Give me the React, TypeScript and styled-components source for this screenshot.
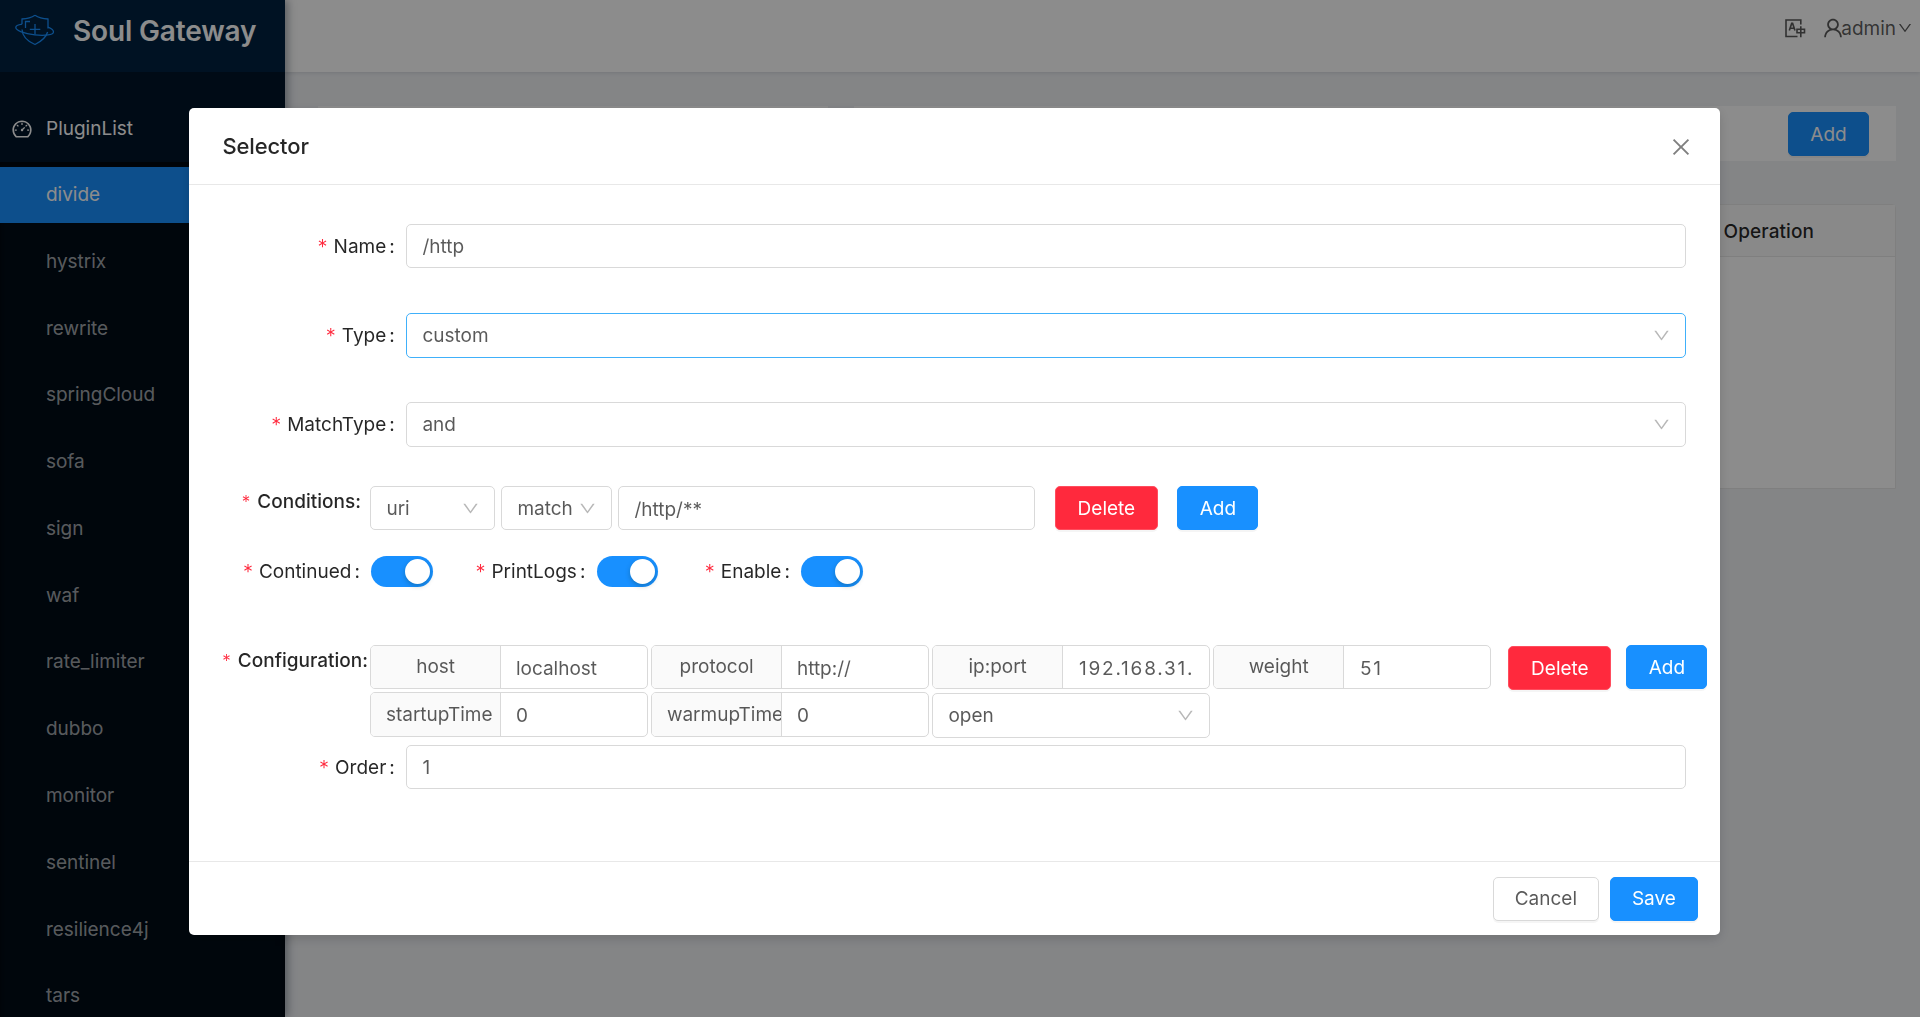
import React from "react";
import styled, { createGlobalStyle } from "styled-components";
import { AiOutlineDashboard, AiOutlineUser, AiOutlineDown, AiOutlineClose } from "react-icons/ai";

const Global = createGlobalStyle`
  *, *::before, *::after { box-sizing: border-box; }
  body { margin: 0; overflow: hidden; font-family: Inter, "Liberation Sans", sans-serif; font-size: 19px; color: rgba(0,0,0,.65); }
`;

const Layout = styled.div`
  display: flex;
  width: 1920px;
  height: 1017px;
  overflow: hidden;
  background: #f0f2f5;
`;

const Sider = styled.aside`
  width: 285.4px;
  flex: none;
  display: flex;
  flex-direction: column;
  background: #001529;
  box-shadow: 3px 0 8px rgba(0, 21, 41, 0.35);
  z-index: 1;
`;

const Brand = styled.div`
  height: 72px;
  flex: none;
  display: flex;
  align-items: flex-start;
  padding: 14px 0 0 15px;
  background: #002140;
`;

const BrandName = styled.h1`
  margin: -2px 0 0 18px;
  font-size: 28px;
  line-height: 38px;
  font-weight: 600;
  letter-spacing: -0.15px;
  color: #fff;
  white-space: nowrap;
`;

const MenuTitle = styled.div`
  height: 90px;
  flex: none;
  display: flex;
  align-items: center;
  gap: 13px;
  padding: 23px 0 0 11px;
  color: #fff;
`;

const SubMenu = styled.ul`
  margin: 0;
  padding: 5px 0 0;
  list-style: none;
  flex: 1;
  background: #000c17;
  box-shadow: inset 0 3px 9px rgba(0, 0, 0, 0.45);
`;

const MenuItem = styled.li<{ $active?: boolean }>`
  height: 55.6px;
  margin-bottom: 11.2px;
  padding-left: 46px;
  line-height: 56.4px;
  letter-spacing: -0.03px;
  color: ${(p) => (p.$active ? "#fff" : "rgba(255,255,255,.65)")};
  background: ${(p) => (p.$active ? "#1890ff" : "transparent")};
`;

const Main = styled.div`
  flex: 1;
  display: flex;
  flex-direction: column;
`;

const TopBar = styled.header`
  height: 72px;
  display: flex;
  justify-content: flex-end;
  padding: 0 7px 16px 0;
  align-items: center;
  background: #fff;
  box-shadow: 0 1px 4px rgba(0, 21, 41, 0.12);
`;

const UserName = styled.span`
  display: flex;
  align-items: center;
  gap: 1px;
  margin-left: 15px;
  svg:first-child { margin-right: -5px; }
`;

const Content = styled.main`
  display: flex;
  flex-direction: column;
  padding: 34px 24px 0 33px;
`;

const Toolbars = styled.div`
  display: grid;
  grid-template-columns: 510px 1fr;
  gap: 26px;
`;

const Toolbar = styled.div`
  height: 55px;
  display: flex;
  justify-content: flex-end;
  align-items: center;
  padding: 1px 27px 0 0;
  background: #fff;
`;

const Table = styled.div`
  height: 285px;
  margin-top: 43px;
  border: 1px solid #e8e8e8;
  border-radius: 4px 4px 0 0;
  background: #fff;
`;

const TableHead = styled.div`
  height: 52px;
  display: flex;
  justify-content: flex-end;
  align-items: center;
  padding: 2px 81px 0 0;
  border-bottom: 1px solid #e8e8e8;
  background: #fafafa;
  color: rgba(0, 0, 0, 0.85);
  font-weight: 500;
  letter-spacing: 0.08px;
`;

const Mask = styled.div`
  position: fixed;
  inset: 0;
  z-index: 10;
  padding: 108.4px 0 0 189.4px;
  background: rgba(0, 0, 0, 0.45);
`;

const Modal = styled.section`
  width: 1530.5px;
  height: 827px;
  display: flex;
  flex-direction: column;
  border-radius: 5px;
  background: #fff;
  box-shadow: 0 4px 12px rgba(0, 0, 0, 0.15);
`;

const ModalHead = styled.div`
  height: 76.5px;
  flex: none;
  display: flex;
  justify-content: space-between;
  align-items: center;
  padding: 0 27px 0 33px;
  border-bottom: 1px solid #e8e8e8;
  color: rgba(0, 0, 0, 0.85);
  font-size: 22px;
  line-height: 26px;
  letter-spacing: -0.12px;
  font-weight: 500;
  svg { margin-top: 2px; }
`;

const ModalBody = styled.div`
  flex: 1;
  padding-top: 39px;
`;

const ModalFoot = styled.div`
  height: 74px;
  display: flex;
  justify-content: flex-end;
  align-items: center;
  gap: 11px;
  padding-right: 22px;
  border-top: 1px solid #e8e8e8;
`;

const Button = styled.button<{ $kind?: "primary" | "danger"; $w: number }>`
  width: ${(p) => p.$w}px;
  height: 44.6px;
  flex: none;
  padding: 0;
  font: inherit;
  border-radius: 5px;
  border: 1px solid ${(p) => (p.$kind === "danger" ? "#ff4d5e" : p.$kind ? "#1890ff" : "#d9d9d9")};
  background: ${(p) => (p.$kind === "danger" ? "#ff293d" : p.$kind ? "#1890ff" : "#fff")};
  color: ${(p) => (p.$kind ? "#fff" : "rgba(0,0,0,.65)")};
  box-shadow: 0 2px 0 rgba(0, 0, 0, 0.04);
`;

const Field = styled.div<{ $gap: number }>`
  display: flex;
  align-items: center;
  margin-bottom: ${(p) => p.$gap}px;
`;

const Label = styled.label<{ $w: number; $strong?: boolean }>`
  width: ${(p) => p.$w}px;
  flex: none;
  display: flex;
  justify-content: flex-end;
  white-space: nowrap;
  padding-top: 1px;
  line-height: 30px;
  color: rgba(0, 0, 0, 0.85);
  font-weight: ${(p) => (p.$strong ? 500 : 400)};
  &::before {
    content: "*";
    margin-right: ${(p) => (p.$strong ? 7 : 6)}px;
    color: #ff293d;
    font-weight: 300;
    font-size: ${(p) => (p.$strong ? 17 : 20)}px;
  }
  &::after {
    content: ":";
    margin-left: ${(p) => (p.$strong ? 0 : 3)}px;
  }
`;

const Box = styled.div<{ $w: number; $focus?: boolean; $nudge?: number }>`
  width: ${(p) => p.$w}px;
  height: 44.6px;
  flex: none;
  display: flex;
  justify-content: space-between;
  align-items: center;
  padding: ${(p) => p.$nudge ?? 0}px 14.5px 0 15px;
  border: 1px solid ${(p) => (p.$focus ? "#40b0fa" : "#d9d9d9")};
  border-radius: 5px;
  overflow: hidden;
  white-space: nowrap;
  background: #fff;
  svg { flex: none; color: rgba(0, 0, 0, 0.28); }
`;

const Conditions = styled.div`
  display: flex;
  align-items: flex-start;
  margin-bottom: 25.4px;
`;

const Switches = styled.div`
  display: flex;
  align-items: center;
  height: 32px;
`;

const Switch = styled.span`
  width: 61.5px;
  height: 31px;
  flex: none;
  display: flex;
  justify-content: flex-end;
  padding: 3px;
  border-radius: 16px;
  background: #1890ff;
  &::after {
    content: "";
    width: 25px;
    height: 25px;
    border-radius: 50%;
    background: #fff;
    box-shadow: 0 2px 5px rgba(0, 35, 11, 0.25);
  }
`;

const Configuration = styled.div`
  display: flex;
  align-items: flex-start;
  margin-top: 57px;
  height: 100px;
`;

const ConfigGrid = styled.div`
  display: grid;
  grid-template-columns: repeat(4, 278px);
  grid-auto-rows: 44.6px;
  gap: 3px;
`;

const Group = styled.div`
  height: 44.6px;
  display: flex;
  border: 1px solid #d9d9d9;
  border-radius: 5px;
  overflow: hidden;
`;

const Addon = styled.span`
  width: 130px;
  flex: none;
  display: flex;
  align-items: center;
  justify-content: safe center;
  padding: 0 15px 1px 14.5px;
  overflow: hidden;
  border-right: 1px solid #d9d9d9;
  background: #fafafa;
`;

const Value = styled.span<{ $spaced?: boolean }>`
  flex: 1;
  display: flex;
  align-items: center;
  margin: 2px 0 0 ${(p) => (p.$spaced ? 15.5 : 14.5)}px;
  overflow: hidden;
  white-space: nowrap;
  letter-spacing: ${(p) => (p.$spaced ? 1.8 : 0)}px;
`;

const Spacer = styled.span<{ $w: number }>`
  width: ${(p) => p.$w}px;
  flex: none;
`;

const Drop = styled.div`
  padding-top: 1px;
`;

const Logo = () => (
  <svg width="40" height="32" viewBox="0 0 40 32" fill="none" stroke="#1890ff" strokeWidth="1.3">
    <path d="M20 1.200C16 4 11.500 4.800 7 5v5.200M7 15.500C7.400 23 13 27.500 20 30.500 26 27.500 31 24 32.600 18M33 14.500V5c-4.500-.2-9-1-13-3.800" />
    <path d="M7 10.200C3 10.800.8 12 .8 13.500c0 3 8.200 6.300 19 7.400 10.400 1 18.700 0 18.700-3 0-1.700-2.100-3.300-5.500-4.700" />
    <path d="M20 10v10.500M14.800 15.300h10.500M10.500 14V7.500H15" />
  </svg>
);

const Translate = () => (
  <svg width="21" height="19" viewBox="0 0 21 19" fill="none" stroke="currentColor" strokeWidth="1.600">
    <path d="M15.800 5.500V1H1v16.500h11.500" />
    <path d="M4.300 11.500 6.700 4.400h.9L10 11.500M5 9.300h4.300" />
    <path d="M12 10.300h7.500v3.500H12zM15.800 7.300v11" />
  </svg>
);

const Arrow = () => <AiOutlineDown size={19} />;

const plugins = ["divide", "hystrix", "rewrite", "springCloud", "sofa", "sign", "waf", "rate_limiter", "dubbo", "monitor", "sentinel", "resilience4j", "tars"];

const configs = [
  ["host", "localhost"],
  ["protocol", "http://"],
  ["ip:port", "192.168.31."],
  ["weight", "51"],
  ["startupTime", "0"],
  ["warmupTime", "0"],
];

export default function App() {
  return (
    <>
      <Global />
      <Layout>
        <Sider>
          <Brand>
            <Logo />
            <BrandName>Soul Gateway</BrandName>
          </Brand>
          <MenuTitle>
            <AiOutlineDashboard size={22} />
            PluginList
          </MenuTitle>
          <SubMenu>
            {plugins.map((name, i) => (
              <MenuItem key={name} $active={i === 0}>{name}</MenuItem>
            ))}
          </SubMenu>
        </Sider>
        <Main>
          <TopBar>
            <Translate />
            <UserName>
              <AiOutlineUser size={24} />
              admin
              <AiOutlineDown size={16} />
            </UserName>
          </TopBar>
          <Content>
            <Toolbars>
              <Toolbar />
              <Toolbar>
                <Button $kind="primary" $w={81}>Add</Button>
              </Toolbar>
            </Toolbars>
            <Table>
              <TableHead>Operation</TableHead>
            </Table>
          </Content>
        </Main>
      </Layout>
      <Mask>
        <Modal>
          <ModalHead>
            Selector
            <AiOutlineClose size={24} color="rgba(0,0,0,.5)" />
          </ModalHead>
          <ModalBody>
            <Field $gap={44.6}>
              <Label $w={205.4}>Name</Label>
              <Spacer $w={11.6} />
              <Box $w={1280}>/http</Box>
            </Field>
            <Field $gap={44.6}>
              <Label $w={205.4}>Type</Label>
              <Spacer $w={11.6} />
              <Box $w={1280} $focus>custom<Arrow /></Box>
            </Field>
            <Field $gap={39}>
              <Label $w={205.4}>MatchType</Label>
              <Spacer $w={11.6} />
              <Box $w={1280}>and<Arrow /></Box>
            </Field>
            <Conditions>
              <Label $w={171.5} $strong>Conditions</Label>
              <Spacer $w={9.5} />
              <Box $w={125}>uri<Arrow /></Box>
              <Spacer $w={6} />
              <Box $w={111}>match<Arrow /></Box>
              <Spacer $w={6} />
              <Box $w={417} $nudge={2}>/http/**</Box>
              <Spacer $w={19.5} />
              <Button $kind="danger" $w={103}>Delete</Button>
              <Spacer $w={19.5} />
              <Button $kind="primary" $w={81}>Add</Button>
            </Conditions>
            <Switches>
              <Label $w={170.5}>Continued</Label>
              <Spacer $w={11.5} />
              <Switch />
              <Label $w={152.5}>PrintLogs</Label>
              <Spacer $w={11.5} />
              <Switch />
              <Label $w={131.5}>Enable</Label>
              <Spacer $w={11.5} />
              <Switch />
            </Switches>
            <Configuration>
              <Label $w={178.5} $strong>Configuration</Label>
              <Spacer $w={2.5} />
              <ConfigGrid>
                {configs.map(([name, value]) => (
                  <Group key={name}>
                    <Addon>{name}</Addon>
                    <Value $spaced={/^\d\d/.test(value)}>{value}</Value>
                  </Group>
                ))}
                <Drop>
                  <Box $w={278}>open<Arrow /></Box>
                </Drop>
              </ConfigGrid>
              <Spacer $w={17} />
              <Drop>
                <Button $kind="danger" $w={103}>Delete</Button>
              </Drop>
              <Spacer $w={15} />
              <Button $kind="primary" $w={81}>Add</Button>
            </Configuration>
            <Field $gap={0}>
              <Label $w={205.4}>Order</Label>
              <Spacer $w={11.6} />
              <Box $w={1280}>1</Box>
            </Field>
          </ModalBody>
          <ModalFoot>
            <Button $w={106}>Cancel</Button>
            <Button $kind="primary" $w={88}>Save</Button>
          </ModalFoot>
        </Modal>
      </Mask>
    </>
  );
}
